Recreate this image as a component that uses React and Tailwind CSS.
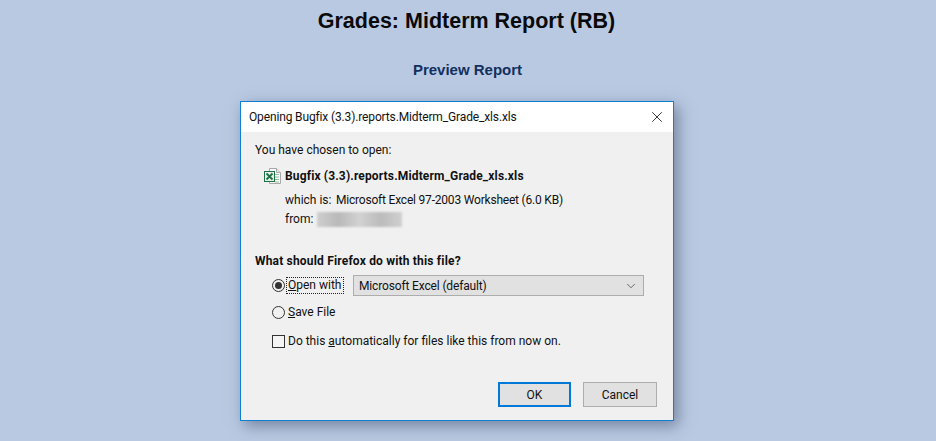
import { ChevronDown, X } from "lucide-react";

const ExcelIcon = () => (
  <svg width="17" height="16" viewBox="0 0 17 16">
    <path d="M5.5 0.5H12.5L16.5 4.5V15.5H5.5Z" fill="#fbfbfb" stroke="#a9a9a9" />
    <path d="M12.5 0.5V4.5H16.5" fill="#e8e8e8" stroke="#a9a9a9" />
    <path d="M11 6.5H15M11 9H15M11 11.5H15M11 14H15" stroke="#8fbf9f" strokeWidth="1.2" />
    <rect x="0.5" y="3.5" width="10" height="10" fill="#e4f0e8" stroke="#1e7145" />
    <path d="M2.5 5.5L8.5 11.5M8.5 5.5L2.5 11.5" stroke="#1e7145" strokeWidth="1.8" />
  </svg>
);

const Radio = ({ checked }) => (
  <span className="flex h-[13px] w-[13px] shrink-0 items-center justify-center rounded-full border border-[#333] bg-[#f0f0f0]">
    {checked && <span className="h-[7px] w-[7px] rounded-full bg-[#333]" />}
  </span>
);

const App = () => {
  return (
    <div className="relative h-[441px] w-[936px] overflow-hidden bg-[#b9c9e2] font-['Liberation_Sans',sans-serif]">
      <h1 className="pt-[8px] pr-[3px] text-center text-[21.5px] leading-[27px] font-bold text-[#0a0a0a]">
        Grades: Midterm Report (RB)
      </h1>
      <h2 className="pt-[26px] pr-[1px] text-center text-[15px] leading-[18px] font-bold text-[#12305f]">
        Preview Report
      </h2>

      <div className="absolute top-[101px] left-[240px] h-[320px] w-[434px] border border-[#0f7fd4] bg-[#f0f0f0] font-['Roboto',sans-serif] text-[12px] text-[#111] shadow-[4px_5px_14px_rgba(60,75,105,0.55)]">
        <div className="flex h-[30px] items-center justify-between bg-white pr-[7px] pl-[8px]">
          <span className="tracking-[-0.14px]">Opening Bugfix (3.3).reports.Midterm_Grade_xls.xls</span>
          <X size={18} strokeWidth={1.1} className="text-[#111]" />
        </div>

        <div className="px-[14px] pt-[9px]">
          <p className="leading-[18px]">You have chosen to open:</p>

          <div className="mt-[8px] flex h-[18px] items-center pl-[9px]">
            <ExcelIcon />
            <span className="ml-[4px] font-bold tracking-[0.15px]">Bugfix (3.3).reports.Midterm_Grade_xls.xls</span>
          </div>

          <div className="mt-[6px] flex h-[18px] items-center pl-[30px]">
            <span className="w-[51px]">which is:</span>
            <span className="tracking-[-0.2px]">Microsoft Excel 97-2003 Worksheet (6.0 KB)</span>
          </div>
          <div className="mt-[1px] flex h-[18px] items-center pl-[30px]">
            <span className="w-[32px]">from:</span>
            <div className="h-[15px] w-[85px] bg-[linear-gradient(90deg,#cfcfcf,#b9b9b9_25%,#d2d2d2_50%,#bcbcbc_75%,#d0d0d0)] blur-[1px]" />
          </div>

          <p className="mt-[24px] leading-[18px] font-bold tracking-[0.18px]">What should Firefox do with this file?</p>

          <div className="mt-[5px] flex h-[21px] items-center pl-[17px]">
            <Radio checked />
            <span className="ml-[1px] w-[58px] border border-dotted border-[#222] pl-[1px] leading-[15px]">
              <span className="underline">O</span>pen with
            </span>
            <div className="ml-[9px] flex h-[21px] w-[291px] items-center justify-between border border-[#adadad] bg-[#e1e1e1] pr-[5px] pl-[5px]">
              <span className="tracking-[-0.15px]">Microsoft Excel (default)</span>
              <ChevronDown size={14} strokeWidth={1.2} className="text-[#333]" />
            </div>
          </div>

          <div className="mt-[7px] flex h-[18px] items-center pl-[17px]">
            <Radio />
            <span className="ml-[3px]">
              <span className="underline">S</span>ave File
            </span>
          </div>

          <div className="mt-[11px] flex h-[18px] items-center pl-[17px]">
            <span className="h-[13px] w-[13px] shrink-0 border border-[#333] bg-[#f4f4f4]" />
            <span className="ml-[3px]">
              Do this <span className="underline">a</span>utomatically for files like this from now on.
            </span>
          </div>

          <div className="mt-[32px] flex justify-end gap-[12px] pr-[2px]">
            <button className="h-[25px] w-[73px] border-2 border-[#0078d7] bg-[#e1e1e1]">OK</button>
            <button className="h-[25px] w-[74px] border border-[#adadad] bg-[#e1e1e1]">Cancel</button>
          </div>
        </div>
      </div>
    </div>
  );
};

export default App;
